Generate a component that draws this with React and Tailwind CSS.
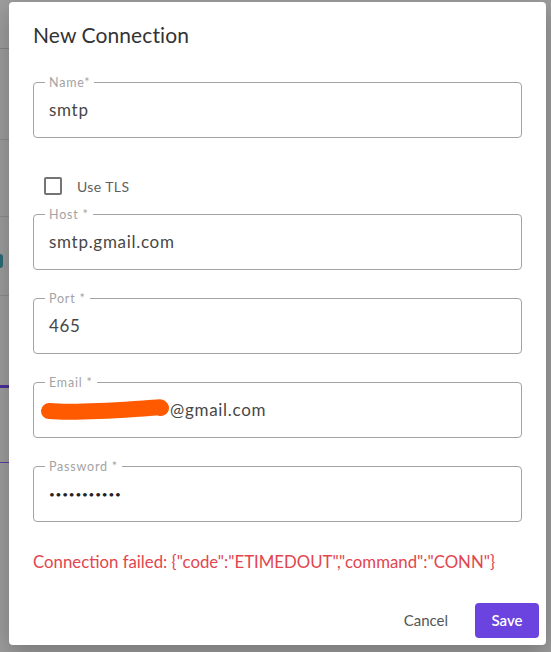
import React from "react";

const Field = ({ label, children }) => (
  <div className="relative h-[56px] rounded-[4px] border border-[#a3a3a3] flex items-center pl-[15px]">
    <span className="absolute left-[11px] top-[-8px] bg-white px-[4px] text-[12.5px] leading-[15px] tracking-[0.8px] text-[#a3a3a3]">
      {label}
    </span>
    <div className="text-[17px] tracking-[0.7px] text-[#474747] flex items-center">{children}</div>
  </div>
);

export default function App() {
  return (
    <div
      className="relative w-[551px] h-[652px] bg-[#9d9d9d] overflow-hidden pl-[9px] pt-[2px]"
      style={{ fontFamily: "Lato, 'Noto Sans', sans-serif" }}
    >
      {/* page behind the overlay */}
      <div className="absolute left-0 top-[48px] w-[9px] h-px bg-[#858585]" />
      <div className="absolute left-0 top-[139px] w-[9px] h-px bg-[#8c8c8c]" />
      <div className="absolute left-0 top-[216px] w-[9px] h-px bg-[#8c8c8c]" />
      <div className="absolute left-0 top-[254px] w-[3px] h-[14px] rounded-r-full bg-[#2b6b78]" />
      <div className="absolute left-0 top-[295px] w-[9px] h-px bg-[#8c8c8c]" />
      <div className="absolute left-0 top-[385px] w-[9px] h-[3px] bg-[#4b2e9a]" />
      <div className="absolute left-0 top-[462px] w-[9px] h-px bg-[#5a3fa0]" />

      <div className="relative w-[537px] h-[643px] bg-white rounded-[4px] shadow-[0_8px_24px_rgba(0,0,0,0.25)] flex flex-col">
        <h2 className="pt-[19px] px-6 text-[21px] leading-[28px] tracking-[0.1px] text-[#333]">New Connection</h2>

        <div className="flex flex-col px-6">
          <div className="mt-[33px]">
            <Field label="Name*">smtp</Field>
          </div>

          <label className="mt-[38px] h-[20px] ml-[11px] flex items-center gap-[15px]">
            <span className="w-[18px] h-[18px] border-2 border-[#747474] rounded-[2px]" />
            <span className="text-[14px] tracking-[0.4px] text-[#5f5f5f]">Use TLS</span>
          </label>

          <div className="mt-[18px] flex flex-col gap-7">
            <Field label="Host *">smtp.gmail.com</Field>
            <Field label="Port *">465</Field>
            <Field label="Email *">
              <svg width="129" height="24" viewBox="0 0 129 24" className="ml-[-8px]">
                <path
                  d="M8 13 C 32 15, 64 13, 94 11 S 118 9, 120 10"
                  stroke="#ff5a00"
                  strokeWidth="16"
                  strokeLinecap="round"
                  fill="none"
                />
              </svg>
              <span>@gmail.com</span>
            </Field>
            <Field label="Password *">
              <span className="text-[10px] tracking-[0.8px] text-[#222]">•••••••••••</span>
            </Field>
          </div>

          <p className="mt-[28px] text-[16.8px] leading-[24px] text-[#e2464e]">
            Connection failed: {'{"code":"ETIMEDOUT","command":"CONN"}'}
          </p>
        </div>

        <div className="mt-[29px] flex justify-end items-center pr-[7px] gap-[16px]">
          <button className="h-[35px] px-[11px] text-[15px] text-[#555]">Cancel</button>
          <button className="w-[64px] h-[35px] rounded-[4px] bg-[#6b44e0] text-white text-[15px] font-semibold">
            Save
          </button>
        </div>
      </div>
    </div>
  );
}
